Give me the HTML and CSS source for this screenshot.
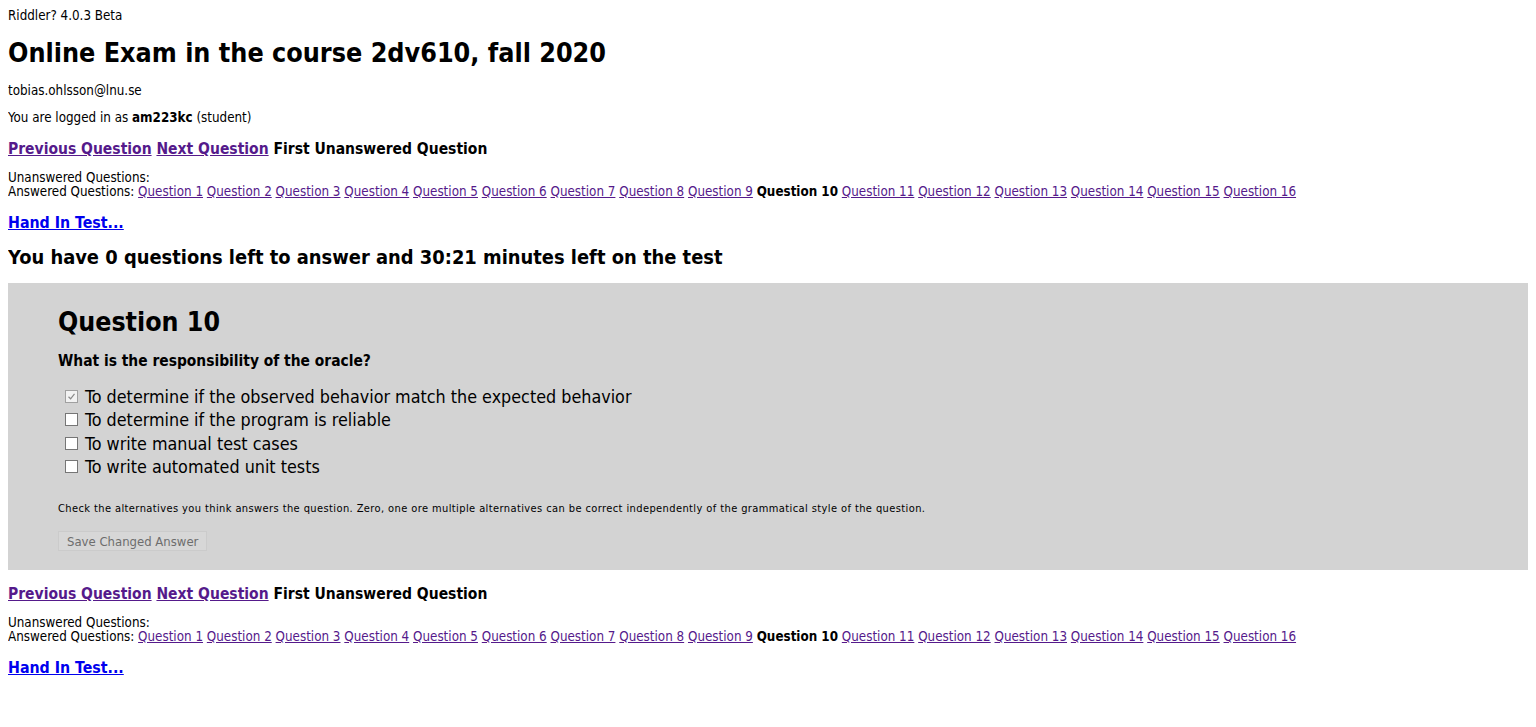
FILE: index.html
```html
<!DOCTYPE html>
<html>
<head>
<meta charset="utf-8">
<title>Riddler</title>
<link rel="stylesheet" href="styles.css">
</head>
<body>
<div class="version">Riddler? 4.0.3 Beta</div>
<h1 class="title">Online Exam in the course 2dv610, fall 2020</h1>
<div class="meta">tobias.ohlsson@lnu.se</div>
<div class="meta">You are logged in as <b>am223kc</b> (student)</div>

<div class="nav"><a class="visited" href="#">Previous Question</a> <a class="visited" href="#">Next Question</a> <span>First Unanswered Question</span></div>
<div class="qlist">
  <div>Unanswered Questions:</div>
  <div>Answered Questions: <a href="#">Question 1</a> <a href="#">Question 2</a> <a href="#">Question 3</a> <a href="#">Question 4</a> <a href="#">Question 5</a> <a href="#">Question 6</a> <a href="#">Question 7</a> <a href="#">Question 8</a> <a href="#">Question 9</a> <b>Question 10</b> <a href="#">Question 11</a> <a href="#">Question 12</a> <a href="#">Question 13</a> <a href="#">Question 14</a> <a href="#">Question 15</a> <a href="#">Question 16</a></div>
</div>
<div class="handin"><a href="#">Hand In Test...</a></div>

<h3 class="left">You have 0 questions left to answer and 30:21 minutes left on the test</h3>

<div class="qbox">
  <h2 class="qtitle">Question 10</h2>
  <div class="qtext">What is the responsibility of the oracle?</div>
  <div class="options">
    <label class="opt"><span class="cb checked"><svg width="9" height="9" viewBox="0 0 9 9"><path d="M1.5 4.8 L3.6 6.8 L7.5 1.8" fill="none" stroke="#8a8a8a" stroke-width="1.2"/></svg></span>To determine if the observed behavior match the expected behavior</label>
    <label class="opt"><span class="cb"></span>To determine if the program is reliable</label>
    <label class="opt"><span class="cb"></span>To write manual test cases</label>
    <label class="opt"><span class="cb"></span>To write automated unit tests</label>
  </div>
  <div class="note">Check the alternatives you think answers the question. Zero, one ore multiple alternatives can be correct independently of the grammatical style of the question.</div>
  <button class="save" disabled>Save Changed Answer</button>
</div>

<div class="nav nav2"><a class="visited" href="#">Previous Question</a> <a class="visited" href="#">Next Question</a> <span>First Unanswered Question</span></div>
<div class="qlist">
  <div>Unanswered Questions:</div>
  <div>Answered Questions: <a href="#">Question 1</a> <a href="#">Question 2</a> <a href="#">Question 3</a> <a href="#">Question 4</a> <a href="#">Question 5</a> <a href="#">Question 6</a> <a href="#">Question 7</a> <a href="#">Question 8</a> <a href="#">Question 9</a> <b>Question 10</b> <a href="#">Question 11</a> <a href="#">Question 12</a> <a href="#">Question 13</a> <a href="#">Question 14</a> <a href="#">Question 15</a> <a href="#">Question 16</a></div>
</div>
<div class="handin"><a href="#">Hand In Test...</a></div>
</body>
</html>
```
FILE: styles.css
```css
body {
  margin: 8px;
  font-family: "DejaVu Sans Condensed", "DejaVu Sans", sans-serif;
  font-size: 13.3px;
  color: #000;
  background: #fff;
}
a { color: #551a8b; }
.version { margin-top: 1px; line-height: 14px; }
.title {
  font-size: 26.7px;
  font-weight: bold;
  margin: 15px 0 16px;
  line-height: 30px;
}
.meta { line-height: 14px; margin-bottom: 13px; }
.nav {
  font-size: 15.5px;
  font-weight: bold;
  line-height: 18px;
  margin: 15px 0 13px;
}
.nav a { color: #551a8b; }
.qlist { line-height: 14px; }
.qlist a { color: #551a8b; }
.handin {
  font-size: 15.8px;
  font-weight: bold;
  line-height: 18px;
  margin-top: 15px;
}
.handin a { color: #0000ee; }
.left {
  font-size: 19.9px;
  font-weight: bold;
  margin: 14px 0 13px;
  line-height: 24px;
}
.qbox {
  background: #d3d3d3;
  padding: 23px 50px 19px;
}
.qtitle {
  font-size: 26.5px;
  margin: 0 0 14px;
  line-height: 32px;
}
.qtext {
  font-size: 15.4px;
  font-weight: bold;
  line-height: 18px;
  margin-bottom: 15px;
}
.options { display: flex; flex-direction: column; }
.opt {
  font-size: 17.8px;
  line-height: 23.3px;
  display: flex;
  align-items: center;
}
.cb {
  width: 11px;
  height: 11px;
  border: 1px solid #767676;
  background: #fff;
  margin: 0 7px 0 7px;
  display: inline-flex;
  align-items: center;
  justify-content: center;
  box-sizing: content-box;
}
.cb.checked { border-color: #a0a0a0; background: #f2f2f2; }
.note {
  font-size: 11px;
  letter-spacing: 0.4px;
  line-height: 12px;
  margin: 25px 0 16px;
}
.save {
  font-family: inherit;
  font-size: 13px;
  color: #6d6d6d;
  background: #d7d7d7;
  border: 1px solid #cbcbcb;
  padding: 1px 8px;
  height: 20px;
  display: block;
}
.nav2 { margin-top: 15px; }
```
